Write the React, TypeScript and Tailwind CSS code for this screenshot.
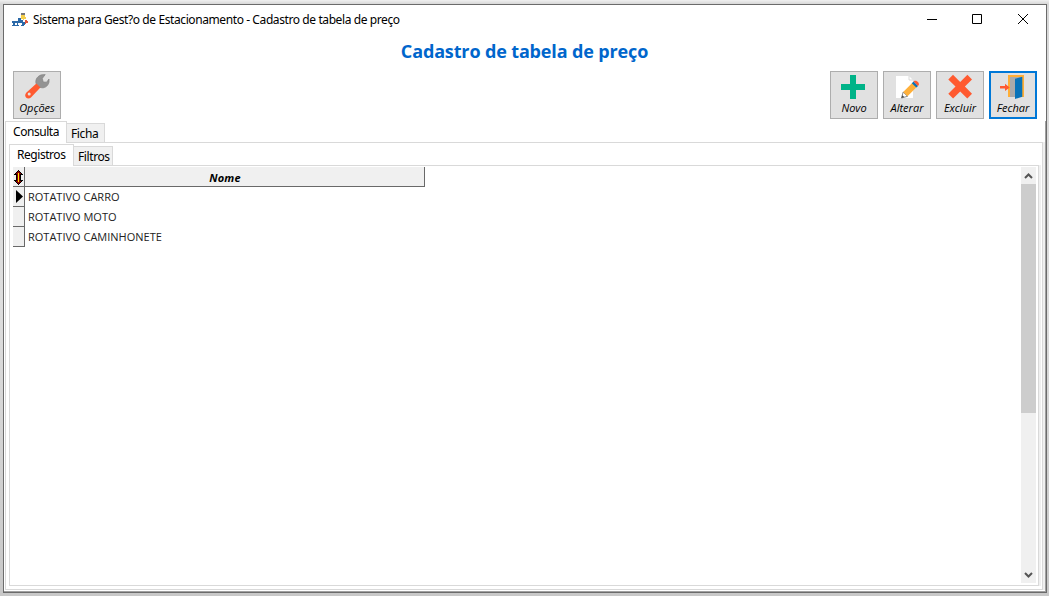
import type { ReactNode } from "react";

const AppIcon = () => (
  <svg width="16" height="14" viewBox="0 0 16 14" className="ml-2 block" shapeRendering="crispEdges">
    <path d="M6 5h3v2h2v2h2v3h-1v1H9v-1h1v-2H6v2h1v1H4v-1h1v-2H3v2h1v1H0v-1h1v-2H0V8h6z" fill="#2b69a8" />
    <path d="M9 0h4v2H9z" fill="#777" />
    <path d="M9 2h4v2h1v2h-2v1h-1V6H9z" fill="#f5cf4a" />
    <path d="M13 7h2v1h1v2h-2v1h-1z" fill="#e0553c" />
  </svg>
);

const Wrench = () => (
  <>
    <path d="M29 3.8 32.2 3.6 29.3 7.4 30.2 11 33.6 11.2 36 8 36 11C35.3 14.5 32.5 17 29 16.8L26.8 16.3 23 12.4C22 8.2 25 4.4 29 3.8Z" fill="#939393" stroke="#828282" strokeWidth=".7" />
    <path d="m23.4 12.4 4 4.1-9.2 9.7c-1.6 1.7-4 1.4-5.2.2s-1-3.2.2-4.6z" fill="#ff5a30" />
    <circle cx="16.2" cy="23" r="1.5" fill="#e1e1e1" />
  </>
);

const Plus = () => <path d="M20 4h6v9h9v6h-9v9h-6v-9h-9v-6h9z" fill="#00b388" />;

const Pencil = () => (
  <>
    <path d="M13 5h13l4 4v18H13z" fill="#fff" />
    <path d="M26 5v4h4" fill="none" stroke="#d0d0d0" strokeWidth=".8" />
    <path d="m18.500 27 1.700-6 4.300 4.300z" fill="#fff" stroke="#555" strokeWidth=".7" />
    <path d="m18.500 27 .9-2.700 1.800 1.800z" fill="#444" />
    <path d="m20.200 21 9.200-9.200 4.300 4.300-9.200 9.200z" fill="#ffb03a" />
    <path d="m28.800 12.200 1.800-1.800 4.500 4.500-1.800 1.700z" fill="#0873b9" />
    <path d="m30.600 10.400.8-.6c2.400-.9 5.400 2 4.300 4.300l-.7.8z" fill="#ff5a30" />
  </>
);

const Cross = () => (
  <path d="m17 3.700 7.200 7.200 7.200-7.200 4.600 4.700-7.100 7.100 7.100 7.200-4.700 4.900-7.100-7.200-7.100 7.200-4.800-4.900 7.200-7.200-7.200-7.100z" fill="#ff5a30" />
);

const Door = () => (
  <>
    <path d="M19 4h16v22H19z" fill="#ffae35" />
    <path d="M21 6h12v20H21z" fill="#aaa" />
    <path d="M26 7.700 33.300 5.800v20L26 28z" fill="#0873b9" />
    <path d="M11 15h5v-2.200l4.700 3.600-4.700 3.600v-2.400h-5z" fill="#ff5a30" />
  </>
);

function ToolButton({ label, focused, children }: { label: string; focused?: boolean; children: ReactNode }) {
  return (
    <button
      className={`flex h-12 w-12 flex-col items-center bg-[#e1e1e1] ${
        focused ? "shadow-[inset_0_0_0_2px_#0078d7]" : "shadow-[inset_0_0_0_1px_#adadad]"
      }`}
    >
      <svg width="48" height="30" viewBox="0 0 48 30" className="block shrink-0">
        {children}
      </svg>
      <span className="font-['Open_Sans','Noto_Sans',sans-serif] text-[11px] leading-[14px] font-medium whitespace-nowrap text-black italic">
        {label}
      </span>
    </button>
  );
}

function Tab({ label, active, className }: { label: string; active?: boolean; className: string }) {
  return (
    <div
      className={`flex border border-[#d9d9d9] font-['Noto_Sans',sans-serif] text-[12px] whitespace-nowrap text-black ${
        active
          ? "relative -mb-px h-[22px] border-b-0 bg-white pl-[7px] leading-[20px] tracking-[-0.45px]"
          : "h-[19px] border-b-0 border-l-0 bg-[#f0f0f0] pl-[4px] leading-[20px] tracking-[-0.4px]"
      } ${className}`}
    >
      <span>{label}</span>
    </div>
  );
}

const rows = ["ROTATIVO CARRO", "ROTATIVO MOTO", "ROTATIVO CAMINHONETE"];

function RecordGrid() {
  return (
    <div className="ml-[3px] flex-1 pt-px">
      <div className="flex h-5 w-[412px] border-b border-[#696969] bg-[#f0f0f0]">
        <div className="flex w-3 items-center justify-center border-r border-[#696969] pt-[2px]">
          <svg width="9" height="15" viewBox="0 0 9 15" className="shrink-0" shapeRendering="crispEdges">
            <path d="M4 0h1v1h1v1h1v1h1v1h1v1H7v5h2v1H8v1H7v1H6v1H5v1H4v-1H3v-1H2v-1H1v-1H0v-1h2V5H0V4h1V3h1V2h1V1h1z" fill="#000" />
            <path d="M4 1h1v1h1v1h1v1H6v7h1v1H6v1H5v1H4v-1H3v-1H2v-1h1V4H2V3h1V2h1z" fill="#900000" />
            <path d="M4 3h1v9H4z" fill="#ffe800" />
          </svg>
        </div>
        <div className="flex-1 border-r border-[#696969] pl-px text-center font-['Open_Sans','Noto_Sans',sans-serif] text-[11px] leading-[21px] font-bold tracking-[0.2px] text-black italic">
          Nome
        </div>
      </div>
      {rows.map((name, i) => (
        <div key={name} className="flex h-5">
          <div className="flex w-3 items-center justify-end border-r border-b border-[#696969] bg-[#f0f0f0]">
            {i === 0 && (
              <svg width="8" height="13" viewBox="0 0 8 13" className="shrink-0">
                <path d="M0 0 7 6.500 0 13z" fill="#000" />
              </svg>
            )}
          </div>
          <div className="pl-[3px] font-['Open_Sans','Noto_Sans',sans-serif] text-[11px] leading-[19px] whitespace-nowrap text-[#222]">
            {name}
          </div>
        </div>
      ))}
    </div>
  );
}

function ScrollBar() {
  return (
    <div className="mt-px mr-[2px] mb-[2px] flex w-[15px] flex-col bg-[#f0f0f0]">
      <svg width="15" height="17" viewBox="0 0 15 17" className="block">
        <path d="m4 11 3.500-3.500L11 11" fill="none" stroke="#555" strokeWidth="2" />
      </svg>
      <div className="h-[229px] bg-[#cdcdcd]" />
      <div className="flex-1" />
      <svg width="15" height="17" viewBox="0 0 15 17" className="block">
        <path d="m4 7 3.500 3.500L11 7" fill="none" stroke="#555" strokeWidth="2" />
      </svg>
    </div>
  );
}

export default function App() {
  return (
    <div className="flex h-[596px] w-[1049px] overflow-hidden bg-[linear-gradient(#f0f0f0,#d8d8d8_4px,#dedede_300px,#c8c8c8)] pt-1 pr-[2px] pb-[3px] pl-[3px]">
      <div className="flex flex-1 flex-col border border-[#6b6b6b] bg-white">
        <header className="flex h-[30px] items-center">
          <AppIcon />
          <span className="ml-[5px] font-['Noto_Sans',sans-serif] text-[12px] tracking-[-0.405px] whitespace-nowrap text-black">
            Sistema para Gest?o de Estacionamento - Cadastro de tabela de preço
          </span>
          <svg width="104" height="12" viewBox="0 0 104 12" className="mr-[16px] ml-auto" fill="none" stroke="#000">
            <path d="M1 5.500h10" />
            <path d="M46.500.5h9v9h-9z" />
            <path d="m92 0 10 10M102 0 92 10" />
          </svg>
        </header>
        <h1 className="h-[36px] pr-px text-center font-['Open_Sans','Noto_Sans',sans-serif] text-[18px] leading-[32px] font-bold tracking-[-0.14px] text-[#0066cc]">
          Cadastro de tabela de preço
        </h1>
        <div className="flex h-[50px] justify-between pr-[9px] pl-[9px]">
          <ToolButton label="Opções">
            <Wrench />
          </ToolButton>
          <div className="flex gap-[5px]">
            <ToolButton label="Novo">
              <Plus />
            </ToolButton>
            <ToolButton label="Alterar">
              <Pencil />
            </ToolButton>
            <ToolButton label="Excluir">
              <Cross />
            </ToolButton>
            <ToolButton label="Fechar" focused>
              <Door />
            </ToolButton>
          </div>
        </div>
        <div className="flex flex-1 flex-col border-r border-b border-[#a0a0a0] pl-px">
          <div className="flex h-[21px] items-end">
            <Tab label="Consulta" active className="w-[62px]" />
            <Tab label="Ficha" className="w-[38px]" />
          </div>
          <div className="mr-[2px] mb-px flex flex-1 flex-col border border-[#d9d9d9] pt-px pr-[3px] pb-[3px] pl-[3px] shadow-[2px_0_0_#f0f0f0]">
            <div className="flex h-[21px] items-end">
              <Tab label="Registros" active className="w-[65px]" />
              <Tab label="Filtros" className="w-[39px]" />
            </div>
            <div className="flex flex-1 border border-[#d9d9d9] shadow-[2px_0_0_#f0f0f0]">
              <RecordGrid />
              <ScrollBar />
            </div>
          </div>
        </div>
      </div>
    </div>
  );
}
